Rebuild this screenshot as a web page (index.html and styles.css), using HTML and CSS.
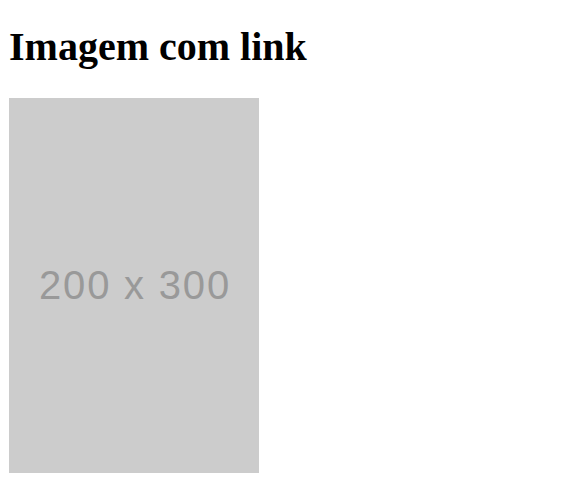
FILE: index.html
```html
<!DOCTYPE html>
<html lang="pt">
<head>
<meta charset="utf-8">
<title>Imagem com link</title>
<link rel="stylesheet" href="styles.css">
</head>
<body>
<h1 class="title">Imagem com link</h1>
<a class="image-link" href="#">
  <div class="placeholder"><span class="placeholder-text">200 x 300</span></div>
</a>
</body>
</html>
```
FILE: styles.css
```css
html, body {
  margin: 0;
  background: #ffffff;
}
body {
  padding: 0 9px;
}
.title {
  margin: 25px 0 29px;
  font-family: "Liberation Serif", "Times New Roman", serif;
  font-weight: bold;
  font-size: 40px;
  line-height: 44px;
  color: #000;
}
.image-link {
  display: block;
  width: 250px;
  text-decoration: none;
}
.placeholder {
  width: 250px;
  height: 375px;
  background: #cccccc;
  display: flex;
  align-items: center;
  justify-content: center;
}
.placeholder-text {
  font-family: "Liberation Sans", Arial, sans-serif;
  font-size: 40px;
  letter-spacing: 1.8px;
  color: #999999;
  margin-right: -2px;
}
```
